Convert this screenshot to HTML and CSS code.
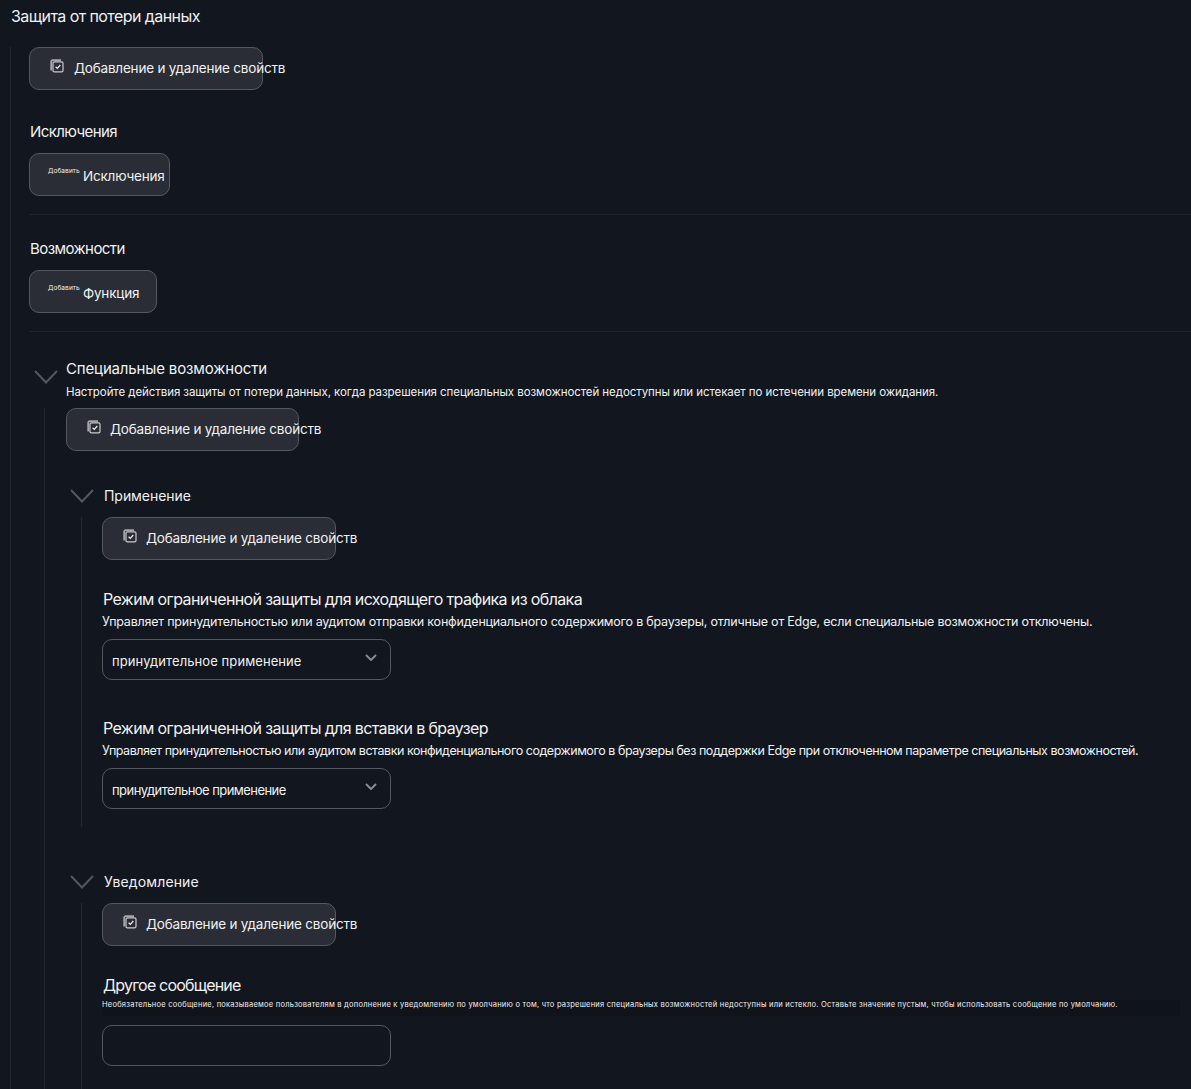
FILE: index.html
```html
<!DOCTYPE html>
<html lang="ru">
<head>
<meta charset="utf-8">
<title>Защита от потери данных</title>
<link rel="stylesheet" href="styles.css">
</head>
<body>
<svg class="defs" width="0" height="0" aria-hidden="true">
  <symbol id="props" viewBox="0 0 14 14">
    <path d="M1.2 11.5V2.8C1.2 1.8 1.8 1.2 2.8 1.2H11" fill="none" stroke="#a4a6ab" stroke-width="1.8"/>
    <rect x="3" y="2.8" width="10" height="10" rx="1.4" fill="#2a2d35" stroke="#c9cacd" stroke-width="1.2"/>
    <path d="M5.6 7.8L7.3 9.4L10.3 6" fill="none" stroke="#eceded" stroke-width="1.2"/>
  </symbol>
  <symbol id="chev" viewBox="0 0 24 14">
    <path d="M1 1L12 12.5L23 1" fill="none" stroke="#54575d" stroke-width="2"/>
  </symbol>
  <symbol id="selchev" viewBox="0 0 12 7">
    <path d="M1 1L6 6L11 1" fill="none" stroke="#8a8c90" stroke-width="1.9"/>
  </symbol>
</svg>

<h1 class="page-title">Защита от потери данных</h1>

<main class="tree">
  <button class="btn btn-props"><svg class="ico"><use href="#props"/></svg><span>Добавление и удаление свойств</span></button>

  <h2 class="label label-first">Исключения</h2>
  <button class="btn btn-add btn-exc"><small class="tiny">Добавить</small><span>Исключения</span></button>
  <hr class="rule">

  <h2 class="label">Возможности</h2>
  <button class="btn btn-add btn-fn"><small class="tiny">Добавить</small><span>Функция</span></button>
  <hr class="rule rule-last">

  <section class="group">
    <header class="group-head">
      <svg class="chev chev-top"><use href="#chev"/></svg>
      <div>
        <h2 class="group-title">Специальные возможности</h2>
        <p class="group-desc">Настройте действия защиты от потери данных, когда разрешения специальных возможностей недоступны или истекает по истечении времени ожидания.</p>
      </div>
    </header>
    <div class="branch">
      <button class="btn btn-props btn-group"><svg class="ico"><use href="#props"/></svg><span>Добавление и удаление свойств</span></button>

      <section class="sub sub-apply">
        <header class="sub-head"><svg class="chev"><use href="#chev"/></svg><h3 class="sub-title">Применение</h3></header>
        <div class="leaf leaf-apply">
          <button class="btn btn-props"><svg class="ico"><use href="#props"/></svg><span>Добавление и удаление свойств</span></button>
          <div class="field field-first">
            <h4 class="field-title">Режим ограниченной защиты для исходящего трафика из облака</h4>
            <p class="field-desc">Управляет принудительностью или аудитом отправки конфиденциального содержимого в браузеры, отличные от Edge, если специальные возможности отключены.</p>
            <div class="select"><span class="wide">принудительное применение</span><svg class="sel-ico"><use href="#selchev"/></svg></div>
          </div>
          <div class="field">
            <h4 class="field-title">Режим ограниченной защиты для вставки в браузер</h4>
            <p class="field-desc field-desc-long">Управляет принудительностью или аудитом вставки конфиденциального содержимого в браузеры без поддержки Edge при отключенном параметре специальных возможностей.</p>
            <div class="select"><span class="narrow">принудительное применение</span><svg class="sel-ico"><use href="#selchev"/></svg></div>
          </div>
        </div>
      </section>

      <section class="sub sub-notify">
        <header class="sub-head"><svg class="chev"><use href="#chev"/></svg><h3 class="sub-title sub-title-wide">Уведомление</h3></header>
        <div class="leaf leaf-notify">
          <button class="btn btn-props"><svg class="ico"><use href="#props"/></svg><span>Добавление и удаление свойств</span></button>
          <div class="field field-first">
            <h4 class="field-title field-title-tight">Другое сообщение</h4>
            <p class="micro">Необязательное сообщение, показываемое пользователям в дополнение к уведомлению по умолчанию о том, что разрешения специальных возможностей недоступны или истекло. Оставьте значение пустым, чтобы использовать сообщение по умолчанию.</p>
            <input class="select text-input" type="text" aria-label="Другое сообщение">
          </div>
        </div>
      </section>
    </div>
  </section>
</main>
</body>
</html>
```
FILE: styles.css
```css
* { box-sizing: border-box; }
html, body { margin: 0; height: 1089px; overflow: hidden; }
body {
  background: #12161e;
  color: #f0f1f3;
  font-family: Inter, "Liberation Sans", sans-serif;
  font-size: 13.5px;
}
.defs { position: absolute; }
h1, h2, h3, h4, p { margin: 0; font-weight: 400; }

.page-title {
  height: 47px;
  padding: 6px 0 0 11px;
  font-size: 16px;
  line-height: 20px;
  letter-spacing: -0.57px;
}
.tree {
  margin-left: 10px;
  padding-left: 18px;
  border-left: 1px solid #23272e;
}
.btn {
  display: flex;
  align-items: center;
  height: 43px;
  padding: 0;
  background: #2a2d35;
  border: 1px solid #55585f;
  border-radius: 10px;
  color: #f0f1f3;
  font: inherit;
  letter-spacing: -0.2px;
  white-space: nowrap;
  text-align: left;
}
.btn-props { width: 234px; padding: 0 0 1px 20px; }
.btn-group { width: 233px; padding-bottom: 2px; }
.ico { width: 14px; height: 14px; margin: -4px 10px 0 0; flex: none; }
.branch .ico { margin-right: 9px; }
.btn-add { padding: 3px 0 0 18px; }
.btn-exc { width: 141px; }
.btn-fn { width: 128px; }
.tiny { font-size: 6.5px; letter-spacing: 0.1px; width: 35px; flex: none; margin-top: -11px; }

.label { font-size: 15px; line-height: 20px; margin: 24px 0 11px 1px; letter-spacing: -0.58px; }
.label-first { margin-top: 32px; }
.rule { border: 0; border-top: 1px solid #1f232a; margin: 18px 0 0; }
.rule-last { margin-bottom: 26px; }

.group-head { display: flex; height: 50px; margin-left: 5px; }
.group-head > div { margin-left: 8px; }
.chev { width: 24px; height: 14px; flex: none; }
.chev-top { margin-top: 12px; }
.group-title { font-size: 15px; line-height: 20px; letter-spacing: -0.15px; margin-top: 1px; }
.group-desc { font-size: 11.5px; line-height: 16px; margin-top: 5px; white-space: nowrap; letter-spacing: -0.07px; }

.branch { margin-left: 15px; padding-left: 21px; border-left: 1px solid #23272e; }
.sub-apply { margin-top: 35px; }
.sub-notify { margin-top: 45px; }
.sub-head { display: flex; align-items: center; height: 20px; margin-left: 4px; margin-bottom: 11px; }
.sub-title { font-size: 14px; line-height: 20px; margin-left: 10px; letter-spacing: -0.05px; }
.sub-title-wide { letter-spacing: 0.15px; }

.leaf { margin-left: 15px; padding-left: 20px; border-left: 1px solid #23272e; }
.leaf-apply { padding-bottom: 18px; }
.leaf-notify { padding-bottom: 40px; }
.field { margin-top: 37px; }
.field-first { margin-top: 28px; }
.field-title { font-size: 16px; line-height: 22px; margin-left: 1px; letter-spacing: -0.62px; }
.field-title-tight { letter-spacing: -0.8px; }
.field-desc { font-size: 12.5px; line-height: 16px; margin: 4px 0 9px; white-space: nowrap; letter-spacing: -0.21px; }
.field-desc-long { letter-spacing: -0.46px; }
.select {
  display: flex;
  align-items: center;
  justify-content: space-between;
  width: 289px;
  height: 41px;
  padding: 2px 13px 0 9px;
  background: transparent;
  border: 1px solid #55585f;
  border-radius: 10px;
  font-size: 13px;
  color: #f0f1f3;
}
.sel-ico { width: 12px; height: 7px; margin-top: -6px; }
.wide { letter-spacing: 0.08px; }
.narrow { letter-spacing: -0.55px; }
.micro {
  width: 1078px;
  height: 16px;
  margin: 4px 0 9px;
  background: #101319;
  font-size: 7.5px;
  line-height: 9px;
  letter-spacing: 0.24px;
  white-space: nowrap;
}
.text-input { display: block; }
```
